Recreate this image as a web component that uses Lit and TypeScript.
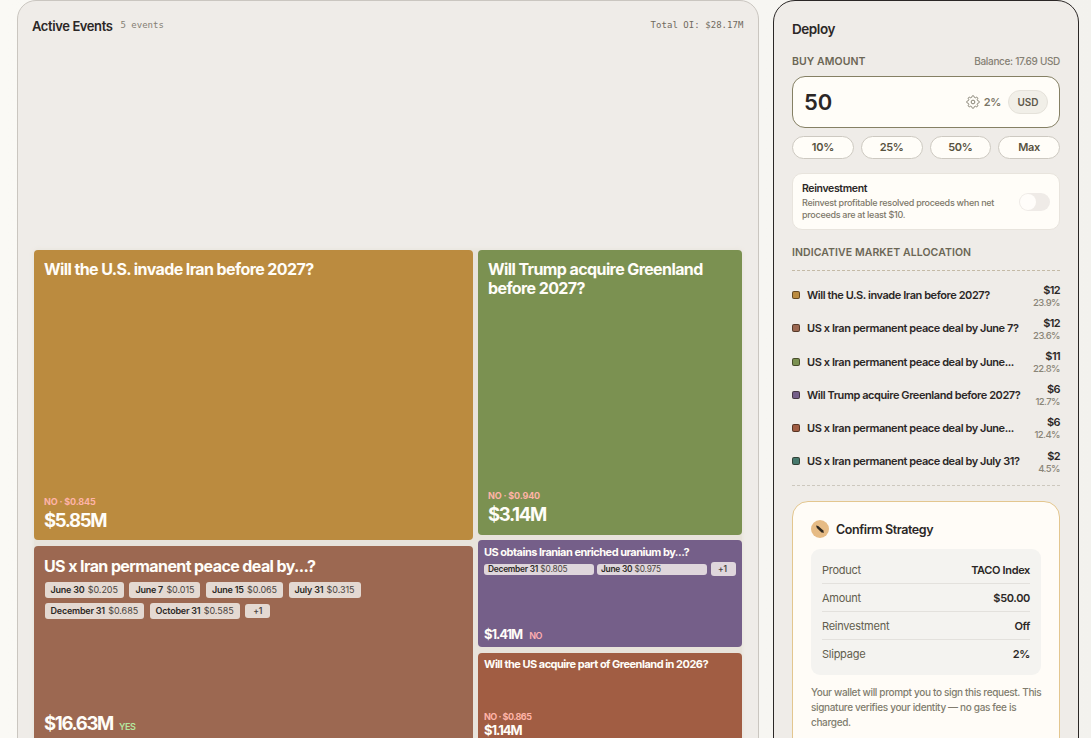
import { LitElement, html, css, nothing } from "lit";
import { customElement, property } from "lit/decorators.js";

const sans = css`"Inter", "Liberation Sans", sans-serif`;

interface Chip {
  label: string;
  price: string;
}

/** Outline of an eight-toothed gear centred on 12,12. */
function gearPath(): string {
  const pts: string[] = [];
  for (let i = 0; i < 96; i++) {
    const a = (i / 96) * Math.PI * 2;
    const r = 9.4 + 1.4 * Math.tanh(2 * Math.cos(8 * a));
    pts.push(`${(12 + r * Math.cos(a)).toFixed(2)} ${(12 + r * Math.sin(a)).toFixed(2)}`);
  }
  return `M${pts.join("L")}Z`;
}

@customElement("event-tile")
export class EventTile extends LitElement {
  @property() heading = "";
  @property() odds = "";
  @property() amount = "";
  @property() side = "";
  @property() more = "";
  @property({ attribute: false }) chips: Chip[] = [];
  @property({ type: Boolean, reflect: true }) compact = false;

  static styles = css`
    :host {
      display: flex;
      flex-direction: column;
      box-sizing: border-box;
      padding: 10px 10px 9px;
      border-radius: 4px;
      overflow: hidden;
      color: #fffdf8;
      font-family: ${sans};
    }
    .heading {
      font-size: 16px;
      line-height: 19px;
      font-weight: 700;
      letter-spacing: -0.6px;
      white-space: pre-line;
    }
    .chips {
      display: flex;
      flex-wrap: wrap;
      align-items: center;
      gap: 5px 5.5px;
      margin: 6px 0 0 0.5px;
      width: 330px;
    }
    .chip {
      box-sizing: border-box;
      height: 16px;
      padding: 0 6px;
      border-radius: 3px;
      background: #e4d9d2;
      color: #4b4440;
      font-size: 9px;
      line-height: 16px;
      letter-spacing: -0.05px;
      white-space: nowrap;
    }
    .chip b {
      font-weight: 600;
      color: #2d2926;
      letter-spacing: -0.22px;
      margin-right: 0.8px;
    }
    .more {
      height: 14px;
      line-height: 14px;
      padding: 0 8px;
      font-size: 8.5px;
      font-weight: 600;
    }
    .foot {
      margin-top: auto;
    }
    .odds {
      font-size: 9px;
      line-height: 12px;
      font-weight: 700;
      color: #ffb4a8;
      letter-spacing: -0.15px;
    }
    .amount {
      font-size: 18.5px;
      line-height: 24px;
      font-weight: 700;
      letter-spacing: -1.35px;
    }
    .side {
      display: inline-block;
      margin-left: 6px;
      font-size: 9px;
      line-height: 1;
      font-weight: 600;
      color: #ffb0b0;
      letter-spacing: -0.4px;
    }
    .yes {
      color: #b5e8a0;
    }
    :host([compact]) {
      padding: 5px 6px 4px;
    }
    :host([compact]) .heading {
      font-size: 11px;
      line-height: 14px;
      letter-spacing: -0.51px;
    }
    :host([compact]) .chips {
      flex-wrap: nowrap;
      gap: 3px;
      margin: 3px 0 0;
      width: auto;
    }
    :host([compact]) .chip {
      height: 11px;
      line-height: 11px;
      width: 110px;
      padding: 0 4px;
      background: #dfd6dc;
      font-size: 8.4px;
      letter-spacing: -0.18px;
    }
    :host([compact]) .chip b {
      letter-spacing: -0.25px;
      margin-right: 0;
    }
    :host([compact]) .chip.more {
      height: 14px;
      line-height: 14px;
      width: 25px;
      padding: 0 7px;
      margin-left: 1px;
    }
    :host([compact]) .odds {
      line-height: 10px;
      letter-spacing: -0.5px;
    }
    :host([compact]) .amount {
      font-size: 13px;
      line-height: 17px;
      letter-spacing: -1.05px;
    }
    :host([compact]) .side {
      margin-left: 7px;
    }
  `;

  render() {
    return html`
      <div class="heading">${this.heading}</div>
      ${this.chips.length
        ? html`<div class="chips">
            ${this.chips.map((c) => html`<span class="chip"><b>${c.label}</b> ${c.price}</span>`)}
            <span class="chip more">${this.more}</span>
          </div>`
        : nothing}
      <div class="foot">
        ${this.odds ? html`<div class="odds">${this.odds}</div>` : nothing}
        <div class="amount">${this.amount}${this.side
          ? html`<span class="side ${this.side === "YES" ? "yes" : ""}">${this.side}</span>`
          : nothing}</div>
      </div>
    `;
  }
}

@customElement("app-root")
export class AppRoot extends LitElement {
  static styles = css`
    :host {
      display: flex;
      align-items: flex-start;
      box-sizing: border-box;
      height: 738px;
      padding-left: 17px;
      gap: 14px;
      overflow: hidden;
      background: linear-gradient(90deg, #faf9f5 0, #f7f6f2 70%, #f3f2ee 100%);
      font-family: ${sans};
      color: #2b2726;
    }
    .events {
      box-sizing: border-box;
      width: 742px;
      height: 790px;
      flex: none;
      border: 1px solid #cac6c0;
      border-radius: 19px;
      background: #efece8;
      padding: 15px 16px 0;
    }
    .events-head {
      display: flex;
      justify-content: space-between;
      align-items: center;
      height: 20px;
      margin: 0 -1.5px 0 -2px;
    }
    .title-row {
      display: flex;
      align-items: center;
      gap: 8px;
    }
    .title {
      font-size: 13px;
      line-height: 20px;
      font-weight: 600;
      letter-spacing: -0.4px;
    }
    .mono {
      font-family: "DejaVu Sans Mono", "Liberation Mono", monospace;
      font-size: 9px;
      line-height: 12px;
      color: #858074;
      padding-bottom: 3px;
    }
    .total {
      letter-spacing: 0.05px;
      color: #6f6a5e;
    }
    .treemap {
      display: grid;
      grid-template-columns: 439px 264px;
      gap: 5px;
      margin-top: 214px;
      border-radius: 4px;
      background: #e8e3db;
      box-shadow: 0 0 4px 1px #e9e5de;
    }
    .col {
      display: flex;
      flex-direction: column;
    }
    .iran { height: 290px; padding-bottom: 8px; background: #bb8b3f; }
    .peace { height: 198px; margin-top: 6px; padding-top: 11px; background: #9c6851; }
    .greenland { height: 285px; background: #7b9151; }
    .uranium { height: 107px; margin-top: 5px; background: #755f89; }
    .part { height: 90px; margin-top: 6px; padding-top: 4px; background: #a15d43; }

    .deploy {
      box-sizing: border-box;
      width: 306px;
      height: 850px;
      flex: none;
      border: 1px solid #2b2726;
      border-radius: 22px;
      background: #efece8;
      padding: 18px 18px 0;
    }
    .deploy-title {
      font-size: 13.5px;
      line-height: 20px;
      font-weight: 600;
      letter-spacing: -0.45px;
    }
    .row {
      display: flex;
      justify-content: space-between;
      align-items: center;
    }
    .buy {
      margin-top: 14px;
      height: 16px;
    }
    .label {
      font-size: 10.5px;
      font-weight: 600;
      color: #6b6655;
      letter-spacing: 0.08px;
    }
    .balance {
      font-size: 10px;
      font-weight: 500;
      color: #858074;
      letter-spacing: -0.32px;
    }
    .field {
      box-sizing: border-box;
      height: 52px;
      margin-top: 7px;
      padding: 0 11px;
      border: 1px solid #858064;
      border-radius: 13px;
      background: #fffdf8;
    }
    .value {
      font-size: 22px;
      font-weight: 600;
    }
    .opts {
      display: flex;
      align-items: center;
    }
    .slip {
      margin: 0 7px 0 4px;
      font-size: 11px;
      font-weight: 600;
      color: #7a7566;
      letter-spacing: -0.3px;
    }
    .unit {
      box-sizing: border-box;
      width: 40px;
      height: 24px;
      border: 1px solid #e5e2da;
      border-radius: 12px;
      background: #f1efe8;
      text-align: center;
      font-size: 10px;
      line-height: 22px;
      font-weight: 600;
      color: #5e594b;
      letter-spacing: -0.1px;
    }
    .quick {
      display: grid;
      grid-template-columns: repeat(4, 1fr);
      gap: 7px;
      margin-top: 8px;
    }
    .pill {
      box-sizing: border-box;
      height: 23px;
      border: 1px solid #cdc9c1;
      border-radius: 12px;
      background: #fffdf8;
      text-align: center;
      font-size: 11px;
      line-height: 21px;
      font-weight: 600;
      color: #57523f;
      letter-spacing: -0.3px;
    }
    .reinvest {
      box-sizing: border-box;
      height: 57px;
      margin-top: 14px;
      padding: 0 9px;
      border: 1px solid #e8e4dd;
      border-radius: 10px;
      background: #fffdf8;
    }
    .re-title {
      font-size: 10.5px;
      line-height: 16px;
      margin-top: -1px;
      font-weight: 600;
      letter-spacing: -0.36px;
    }
    .re-text {
      font-size: 9px;
      line-height: 12px;
      font-weight: 500;
      color: #7d7869;
      letter-spacing: -0.28px;
      white-space: pre;
    }
    .toggle {
      width: 31px;
      height: 18px;
      box-sizing: border-box;
      padding: 1px;
      border-radius: 9px;
      background: #efebe7;
    }
    .knob {
      width: 16px;
      height: 16px;
      border-radius: 50%;
      background: #fffdfa;
    }
    .alloc-label {
      margin-top: 15px;
      line-height: 16px;
      padding-bottom: 9px;
      border-bottom: 1px dashed #c4baa6;
    }
    .alloc {
      padding: 7.600px 0 7.400px;
      border-bottom: 1px dashed #cdc8be;
    }
    .item {
      display: flex;
      align-items: center;
      height: 33.2px;
    }
    .swatch {
      box-sizing: border-box;
      width: 8px;
      height: 8px;
      border: 1px solid rgba(30, 20, 10, 0.55);
      border-radius: 2px;
    }
    .gold { background: #bb8b3f; }
    .clay { background: #9c6851; }
    .moss { background: #7b9151; }
    .plum { background: #755f89; }
    .rust { background: #a15d43; }
    .teal { background: #47796d; }
    .name {
      flex: 1;
      margin-left: 7px;
      font-size: 11px;
      font-weight: 600;
      white-space: nowrap;
      letter-spacing: -0.43px;
    }
    .nums {
      text-align: right;
      padding-top: 2px;
    }
    .usd {
      font-size: 11px;
      line-height: 13px;
      font-weight: 600;
      letter-spacing: -0.6px;
    }
    .pct {
      font-size: 9.5px;
      line-height: 12px;
      font-weight: 500;
      color: #8a8577;
      letter-spacing: -0.55px;
    }
    .confirm {
      box-sizing: border-box;
      height: 330px;
      margin-top: 15px;
      padding: 18px 18px 0;
      border: 1px solid #e3c68f;
      border-radius: 16px;
      background: #fffcf7;
    }
    .confirm-head {
      display: flex;
      align-items: center;
      gap: 7px;
      height: 18px;
    }
    .badge {
      display: block;
    }
    .confirm-title {
      font-size: 12.5px;
      font-weight: 600;
      letter-spacing: -0.4px;
      padding-top: 1px;
    }
    .facts {
      margin-top: 11px;
      padding: 7px 11px;
      border-radius: 9px;
      background: #f4f3f0;
    }
    .fact {
      box-sizing: border-box;
      height: 28px;
      border-bottom: 1px solid #e3e1dd;
      font-size: 11px;
      color: #625d4d;
      letter-spacing: -0.25px;
    }
    .fact:last-child {
      border-bottom: 0;
    }
    .fact b {
      font-weight: 600;
      color: #2b2726;
      letter-spacing: -0.35px;
    }
    .note {
      margin-top: 10px;
      font-size: 10px;
      line-height: 15px;
      font-weight: 500;
      color: #817c6e;
      letter-spacing: -0.34px;
      white-space: pre;
    }
  `;

  private allocation = [
    ["gold", "Will the U.S. invade Iran before 2027?", "$12", "23.9%"],
    ["clay", "US x Iran permanent peace deal by June 7?", "$12", "23.6%"],
    ["moss", "US x Iran permanent peace deal by June...", "$11", "22.8%"],
    ["plum", "Will Trump acquire Greenland before 2027?", "$6", "12.7%"],
    ["rust", "US x Iran permanent peace deal by June...", "$6", "12.4%"],
    ["teal", "US x Iran permanent peace deal by July 31?", "$2", "4.5%"],
  ];

  private facts = [
    ["Product", "TACO Index"],
    ["Amount", "$50.00"],
    ["Reinvestment", "Off"],
    ["Slippage", "2%"],
  ];

  private peaceChips: Chip[] = [
    { label: "June 30", price: "$0.205" },
    { label: "June 7", price: "$0.015" },
    { label: "June 15", price: "$0.065" },
    { label: "July 31", price: "$0.315" },
    { label: "December 31", price: "$0.685" },
    { label: "October 31", price: "$0.585" },
  ];

  private uraniumChips: Chip[] = [
    { label: "December 31", price: "$0.805" },
    { label: "June 30", price: "$0.975" },
  ];

  render() {
    return html`
      <section class="events">
        <div class="events-head">
          <div class="title-row"><span class="title">Active Events</span><span class="mono">5 events</span></div>
          <span class="mono total">Total OI: $28.17M</span>
        </div>
        <div class="treemap">
          <div class="col">
            <event-tile class="iran" heading="Will the U.S. invade Iran before 2027?" odds="NO · $0.845" amount="$5.85M"></event-tile>
            <event-tile class="peace" heading="US x Iran permanent peace deal by...?" .chips=${this.peaceChips} more="+1" amount="$16.63M" side="YES"></event-tile>
          </div>
          <div class="col">
            <event-tile class="greenland" heading=${"Will Trump acquire Greenland\nbefore 2027?"} odds="NO · $0.940" amount="$3.14M"></event-tile>
            <event-tile compact class="uranium" heading="US obtains Iranian enriched uranium by...?" .chips=${this.uraniumChips} more="+1" amount="$1.41M" side="NO"></event-tile>
            <event-tile compact class="part" heading="Will the US acquire part of Greenland in 2026?" odds="NO · $0.865" amount="$1.14M"></event-tile>
          </div>
        </div>
      </section>
      <section class="deploy">
        <div class="deploy-title">Deploy</div>
        <div class="row buy"><span class="label">BUY AMOUNT</span><span class="balance">Balance: 17.69 USD</span></div>
        <div class="row field">
          <span class="value">50</span>
          <div class="opts">
            <svg width="14" height="14" viewBox="0 0 24 24" fill="none" stroke="#7d7869" stroke-width="1.6" stroke-linejoin="round">
              <path d=${gearPath()} />
              <circle cx="12" cy="12" r="3.2" />
            </svg>
            <span class="slip">2%</span>
            <span class="unit">USD</span>
          </div>
        </div>
        <div class="quick">${["10%", "25%", "50%", "Max"].map((q) => html`<div class="pill">${q}</div>`)}</div>
        <div class="row reinvest">
          <div>
            <div class="re-title">Reinvestment</div>
            <div class="re-text">${"Reinvest profitable resolved proceeds when net\nproceeds are at least $10."}</div>
          </div>
          <div class="toggle"><div class="knob"></div></div>
        </div>
        <div class="label alloc-label">INDICATIVE MARKET ALLOCATION</div>
        <div class="alloc">
          ${this.allocation.map(
            ([tone, name, usd, pct]) => html`<div class="item">
              <span class="swatch ${tone}"></span><span class="name">${name}</span>
              <div class="nums"><div class="usd">${usd}</div><div class="pct">${pct}</div></div>
            </div>`
          )}
        </div>
        <div class="confirm">
          <div class="confirm-head">
            <svg class="badge" width="18" height="18" viewBox="0 0 18 18">
              <circle cx="9" cy="9" r="9" fill="#e6bb85"/>
              <path d="M5 5.600l2.200.5 4.900 4.100.9 2.500-2.500-.3L5.900 8z" fill="#2f2820"/>
            </svg>
            <span class="confirm-title">Confirm Strategy</span>
          </div>
          <div class="facts">${this.facts.map(([k, v]) => html`<div class="row fact"><span>${k}</span><b>${v}</b></div>`)}</div>
          <div class="note">${"Your wallet will prompt you to sign this request. This\nsignature verifies your identity — no gas fee is\ncharged."}</div>
        </div>
      </section>
    `;
  }
}
